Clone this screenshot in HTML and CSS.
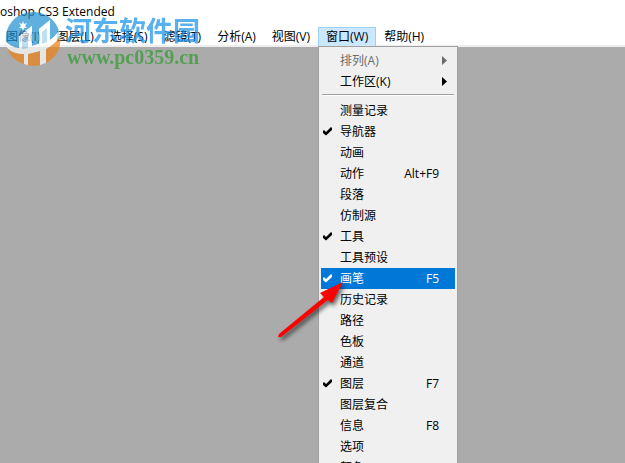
FILE: index.html
```html
<!DOCTYPE html>
<html lang="zh-CN">
<head>
  <title>Photoshop CS3 Extended</title>
  <meta charset="utf-8">
  <link rel="stylesheet" href="styles.css">
</head>
<body>

  <header class="title-bar">oshop CS3 Extended</header>

  <nav class="menu-bar">
    <button class="menu-title">图像(I)</button>
    <button class="menu-title">图层(L)</button>
    <button class="menu-title">选择(S)</button>
    <button class="menu-title">滤镜(T)</button>
    <button class="menu-title">分析(A)</button>
    <button class="menu-title">视图(V)</button>
    <div class="menu-group">
      <button class="menu-title open">窗口(W)</button>
      <!-- Window menu -->
      <div class="dropdown">
        <button class="item" disabled><span class="check"></span><span class="label">排列(A)</span><svg class="sub" viewBox="0 0 5 9"><path d="M0 0L5 4.500L0 9Z"/></svg></button>
        <button class="item"><span class="check"></span><span class="label">工作区(K)</span><svg class="sub" viewBox="0 0 5 9"><path d="M0 0L5 4.500L0 9Z"/></svg></button>
        <hr class="separator">
        <button class="item"><span class="check"></span><span class="label">测量记录</span></button>
        <button class="item"><svg class="check" viewBox="0 0 9 9"><path d="M0 4L1 3L3 5L8 0L9 1V3L3 8.500L0 6Z"/></svg><span class="label">导航器</span></button>
        <button class="item"><span class="check"></span><span class="label">动画</span></button>
        <button class="item"><span class="check"></span><span class="label">动作</span><span class="key">Alt+F9</span></button>
        <button class="item"><span class="check"></span><span class="label">段落</span></button>
        <button class="item"><span class="check"></span><span class="label">仿制源</span></button>
        <button class="item"><svg class="check" viewBox="0 0 9 9"><path d="M0 4L1 3L3 5L8 0L9 1V3L3 8.500L0 6Z"/></svg><span class="label">工具</span></button>
        <button class="item"><span class="check"></span><span class="label">工具预设</span></button>
        <button class="item selected"><svg class="check" viewBox="0 0 9 9"><path d="M0 4L1 3L3 5L8 0L9 1V3L3 8.500L0 6Z"/></svg><span class="label">画笔</span><span class="key">F5</span></button>
        <button class="item"><span class="check"></span><span class="label">历史记录</span></button>
        <button class="item"><span class="check"></span><span class="label">路径</span></button>
        <button class="item"><span class="check"></span><span class="label">色板</span></button>
        <button class="item"><span class="check"></span><span class="label">通道</span></button>
        <button class="item"><svg class="check" viewBox="0 0 9 9"><path d="M0 4L1 3L3 5L8 0L9 1V3L3 8.500L0 6Z"/></svg><span class="label">图层</span><span class="key">F7</span></button>
        <button class="item"><span class="check"></span><span class="label">图层复合</span></button>
        <button class="item"><span class="check"></span><span class="label">信息</span><span class="key">F8</span></button>
        <button class="item"><span class="check"></span><span class="label">选项</span></button>
        <button class="item"><span class="check"></span><span class="label">颜色</span></button>
      </div>
    </div>
    <button class="menu-title">帮助(H)</button>
  </nav>

  <main class="workspace"></main>

  <!-- Site watermark -->
  <div class="watermark">
    <svg class="logo" viewBox="0 0 56 56">
      <path fill="#1d8fd2" d="M1 31C-1 14 12 1 28 1C41 1 51 9 54 20Q50 26 45 29V9L34 18V33L27 35V15L14 25V37Q6 36 1 31Z"/>
      <path fill="#ee8012" d="M2 37Q9 43 19 43V53Q6 49 2 37ZM23 43L35 40V54Q29 56 23 54ZM41 38Q50 33 55 25C57 37 51 47 41 52Z"/>
      <path fill="#fff" d="M0 30Q6 37 14 37V25L27 15V35L34 33V18L45 9V29Q51 25 54 19L55 25Q50 33 41 38V52L35 54V40L23 43V54L19 53V43Q8 43 2 37Z"/>
      <path fill="#1d8fd2" d="M17 28L23 23V37L17 38ZM37 21L42 17V31L37 33Z" opacity="0.4"/>
      <path fill="#fff" d="M18 10L19 13L22 12L20 15L22 17L19 17L18 20L17 17L14 17L16 15L14 12L17 13Z"/>
    </svg>
    <div class="site">
      <span class="site-name">河东软件园</span>
      <span class="site-url">www.pc0359.cn</span>
    </div>
  </div>

  <!-- Arrow pointing at the selected item -->
  <svg class="pointer" viewBox="0 0 70 60">
    <path d="M1 54L46 17L42 13L65 2L54 23L50 20L3 57L0 57Z"/>
  </svg>

</body>
</html>
```
FILE: styles.css
```css
/* General Page Styling */
body {
  font-family: "Open Sans", "Noto Sans CJK SC", sans-serif;
  font-size: 12px;
  line-height: 18px;
  color: #000;
  background-color: #fff;
  margin: 0;
  height: 100vh;
  overflow: hidden;
  display: flex;
  flex-direction: column;
}

button {
  font: inherit;
  color: inherit;
  background: none;
  border: none;
  padding: 0;
}

/* Title and Menu Bar */
.title-bar {
  padding-top: 3px;
  height: 24px;
  white-space: nowrap;
}

.menu-bar {
  display: flex;
  height: 18px;
  margin-left: -2px;
  border-bottom: 2px solid #eee;
}

.menu-title {
  height: 20px;
  padding: 0 8px;
  white-space: nowrap;
}

.menu-title.open {
  padding: 0 7px;
  background-color: #cce8ff;
  border: 1px solid #99d1ff;
}

.menu-group {
  position: relative;
}

/* Dropdown Menu */
.dropdown {
  position: absolute;
  top: 19px;
  left: 0;
  z-index: 1;
  width: 134px;
  padding: 3px 2px;
  background-color: #f0f0f0;
  border: 1px solid #a0a0a0;
}

.item {
  display: flex;
  align-items: center;
  width: 100%;
  height: 21px;
  padding: 0 8px 0 2px;
  text-align: left;
}

.item:disabled {
  color: #6d6d6d;
}

.item.selected {
  background-color: #0078d7;
  color: #fff;
}

.check {
  width: 9px;
  height: 9px;
  margin-right: 8px;
  fill: currentColor;
}

.label {
  flex: 1;
}

.key {
  margin-right: 8px;
}

.sub {
  width: 5px;
  height: 9px;
  fill: currentColor;
}

.separator {
  margin: 2px 1px 4px;
  border: none;
  border-top: 1px solid #a0a0a0;
  border-bottom: 1px solid #fff;
}

.workspace {
  flex: 1;
  background-color: #ababab;
}

/* Watermark */
.watermark {
  position: absolute;
  top: 11px;
  left: 5px;
  display: flex;
  gap: 4px;
  opacity: 0.7;
  pointer-events: none;
}

.logo {
  width: 56px;
  height: 56px;
}

.site {
  display: flex;
  flex-direction: column;
  padding-top: 2px;
}

.site-name {
  font-family: "Noto Sans CJK SC", sans-serif;
  font-size: 27px;
  font-weight: bold;
  line-height: 34px;
  color: #148fe8;
}

.site-url {
  padding-left: 2px;
  font-family: "Liberation Serif", serif;
  font-size: 20px;
  font-weight: bold;
  line-height: 20px;
  color: #329a32;
}

/* Red Arrow */
.pointer {
  position: absolute;
  top: 280px;
  left: 278px;
  z-index: 2;
  width: 70px;
  height: 60px;
  overflow: visible;
  fill: #f00;
  filter: drop-shadow(2px 3px 2px rgba(0, 0, 0, 0.6));
  pointer-events: none;
}
```
